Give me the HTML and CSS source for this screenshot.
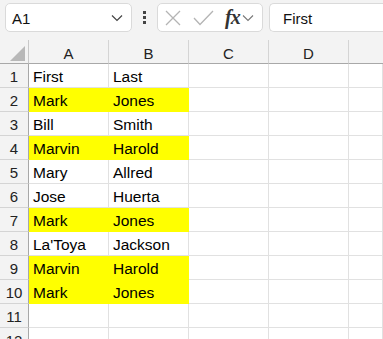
FILE: index.html
```html
<!DOCTYPE html>
<html lang="en">
<head>
    <meta charset="UTF-8">
    <title>Sheet1</title>
    <link rel="stylesheet" href="styles.css">
</head>
<body>
<div class="toolbar">
    <div class="namebox">
        <span>A1</span>
        <svg class="chev" width="12" height="8" viewBox="0 0 12 8"><path d="M1 1.5 L6 6.5 L11 1.5" fill="none" stroke="#444" stroke-width="1.2"/></svg>
    </div>
    <div class="dots"><i></i><i></i><i></i></div>
    <div class="fxbox">
        <svg width="16" height="16" viewBox="0 0 16 16"><path d="M1 1 L15 15 M15 1 L1 15" stroke="#b4b4b4" stroke-width="1.3" fill="none"/></svg>
        <svg width="21" height="16" viewBox="0 0 21 16"><path d="M1 8 L7 14.5 L20 1" stroke="#b4b4b4" stroke-width="1.3" fill="none"/></svg>
        <span class="fx">fx</span>
        <svg class="chev" width="12" height="8" viewBox="0 0 12 8"><path d="M1 1.5 L6 6.5 L11 1.5" fill="none" stroke="#777" stroke-width="1.1"/></svg>
    </div>
    <div class="formula">First</div>
</div>
<div class="sheet" id="sheet">
    <div class="corner"><span class="tri"></span></div>
    <div class="colhead">A</div>
    <div class="colhead">B</div>
    <div class="colhead">C</div>
    <div class="colhead">D</div>
    <div class="colhead last"></div>
</div>
<script>
    var data = [
        ['First', 'Last', 0],
        ['Mark', 'Jones', 1],
        ['Bill', 'Smith', 0],
        ['Marvin', 'Harold', 1],
        ['Mary', 'Allred', 0],
        ['Jose', 'Huerta', 0],
        ['Mark', 'Jones', 1],
        ["La'Toya", 'Jackson', 0],
        ['Marvin', 'Harold', 1],
        ['Mark', 'Jones', 1],
        ['', '', 0],
        ['', '', 0]
    ];
    var sheet = document.getElementById('sheet');
    var html = '';
    for (var i = 0; i < data.length; i++) {
        var fill = data[i][2] ? ' fill' : '';
        html += '<div class="rowhead">' + (i + 1) + '</div>';
        html += '<div class="cell' + fill + '">' + data[i][0] + '</div>';
        html += '<div class="cell' + fill + '">' + data[i][1] + '</div>';
        html += '<div class="cell"></div><div class="cell"></div><div class="cell"></div>';
    }
    sheet.innerHTML += html;
</script>
</body>
</html>
```
FILE: styles.css
```css
* {
    margin: 0;
    padding: 0;
    box-sizing: border-box;
}
body {
    width: 383px;
    height: 339px;
    overflow: hidden;
    background: #f3f3f3;
    font-family: "Liberation Sans", Arial, sans-serif;
    color: #111;
}
.toolbar {
    display: flex;
    align-items: center;
    height: 40px;
    padding: 3px 0 8px 5px;
}
.namebox {
    width: 127px;
    height: 29px;
    background: #fff;
    border: 1px solid #dadada;
    border-radius: 5px;
    display: flex;
    align-items: center;
    justify-content: space-between;
    padding: 2px 8px 0 6px;
    font-size: 15px;
}
.namebox .chev {
    margin-top: -2px;
}
.dots {
    width: 25px;
    display: flex;
    flex-direction: column;
    align-items: center;
    gap: 2px;
}
.dots i {
    display: block;
    width: 3px;
    height: 3px;
    background: #444;
}
.fxbox {
    width: 106px;
    height: 29px;
    background: #fff;
    border: 1px solid #dadada;
    border-radius: 5px;
    display: flex;
    align-items: center;
    padding: 0 3px 0 7px;
    gap: 12px;
}
.fxbox .chev {
    margin-left: -10px;
}
.fx {
    font-family: "Liberation Serif", "Times New Roman", serif;
    font-style: italic;
    font-weight: bold;
    font-size: 20px;
    color: #333;
    margin-left: -1px;
    letter-spacing: -1px;
}
.formula {
    flex: 1;
    height: 29px;
    margin-left: 6px;
    background: #fff;
    border: 1px solid #dadada;
    border-right: none;
    border-radius: 5px 0 0 5px;
    display: flex;
    align-items: center;
    padding: 2px 0 0 13px;
    font-size: 15px;
}
.sheet {
    display: grid;
    grid-template-columns: 29px 80px 80px 80px 80px 1fr;
    grid-auto-rows: 24px;
    background: #fff;
}
.corner,
.colhead {
    background: #f3f3f3;
    border-bottom: 1px solid #a8a8a8;
}
.corner {
    border-right: 1px solid #c8c8c8;
    position: relative;
}
.tri {
    position: absolute;
    right: 3px;
    bottom: 2px;
    width: 0;
    height: 0;
    border-left: 15px solid transparent;
    border-bottom: 15px solid #b8b8b8;
}
.colhead {
    border-right: 1px solid #d4d4d4;
    display: flex;
    align-items: center;
    justify-content: center;
    padding-top: 3px;
    font-size: 15px;
    color: #222;
}
.colhead.last {
    border-right: none;
}
.rowhead {
    background: #f3f3f3;
    border-right: 1px solid #a8a8a8;
    border-bottom: 1px solid #d4d4d4;
    display: flex;
    align-items: center;
    justify-content: center;
    padding-top: 1px;
    font-size: 15px;
    color: #222;
}
.cell {
    border-right: 1px solid #e1e1e1;
    border-bottom: 1px solid #e1e1e1;
    padding: 3px 0 0 4px;
    font-size: 15.5px;
    line-height: 20px;
    white-space: nowrap;
    color: #000;
}
.cell.fill {
    background: #ffff00;
    border-color: #ffff00;
}
```
